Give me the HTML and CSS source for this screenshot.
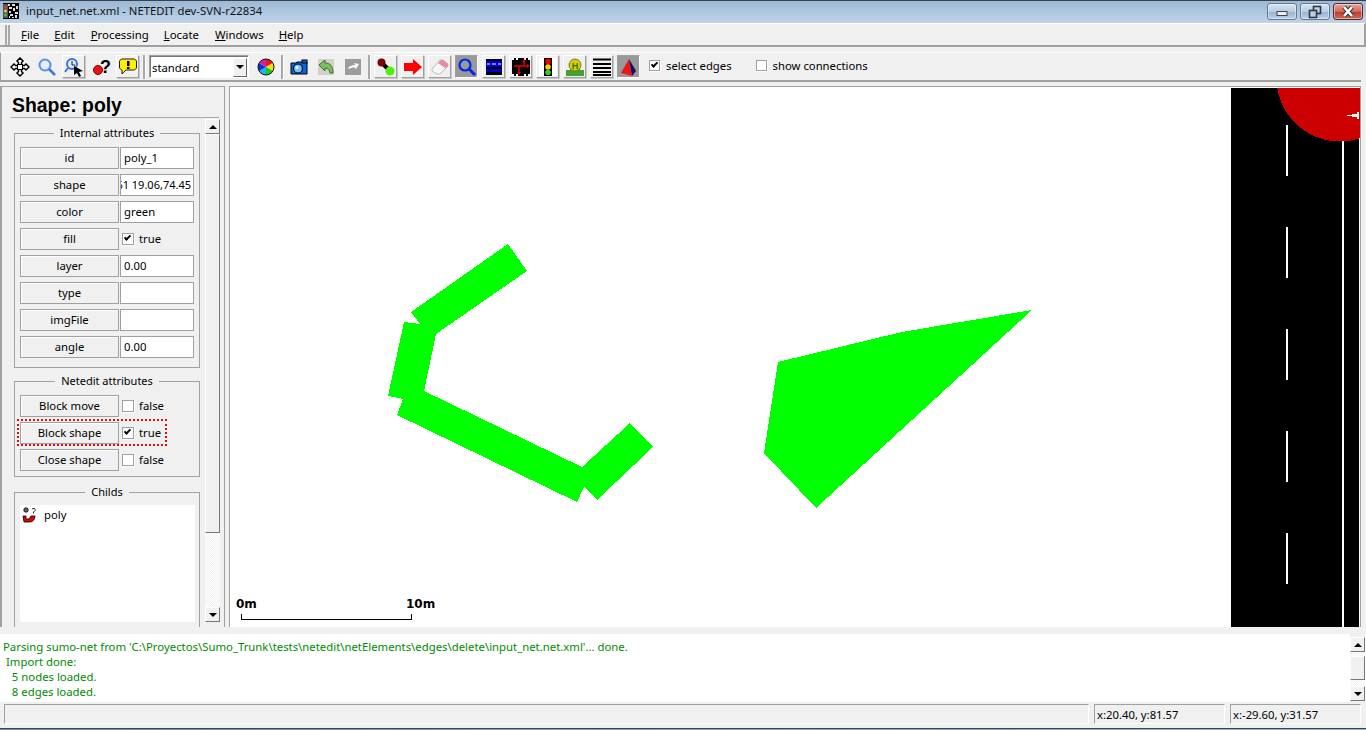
FILE: index.html
```html
<!DOCTYPE html>
<html lang="en">
<head>
<meta charset="utf-8">
<title>input_net.net.xml - NETEDIT dev-SVN-r22834</title>
<link rel="stylesheet" href="styles.css">
</head>
<body>
<header class="titlebar">
  <svg class="appicon" viewBox="0 0 16 16" width="16" height="16">
    <rect width="16" height="16" fill="#000"/>
    <path d="M5 1h2v2H5zM9 1h3v2H9zM13 3h2v3h-2zM6 4h3v2H6zM10 5h2v3h-2zM6 8h2v2H6zM12 9h3v2h-3zM7 11h3v2H7zM12 12h2v3h-2zM6 13h1v2H6zM9 14h2v1H9z" fill="#ddd"/>
    <rect x="0" y="1" width="5" height="14" fill="#555"/>
    <circle cx="2.5" cy="4" r="1.5" fill="#e33"/><circle cx="2.5" cy="8" r="1.5" fill="#ec3"/><circle cx="2.5" cy="12" r="1.5" fill="#4b4"/>
  </svg>
  <span class="title">input_net.net.xml - NETEDIT dev-SVN-r22834</span>
  <div class="winbtns">
    <div class="winbtn"><svg viewBox="0 0 30 17" width="30" height="17"><rect x="10" y="8.5" width="10" height="4" fill="#eee" stroke="#445" stroke-width="1"/></svg></div>
    <div class="winbtn"><svg viewBox="0 0 30 17" width="30" height="17"><rect x="13.5" y="3.5" width="7" height="7" fill="none" stroke="#334" stroke-width="1.6"/><rect x="9.5" y="7.5" width="7" height="7" fill="#b9cfe3" stroke="#334" stroke-width="1.6"/></svg></div>
    <div class="winbtn close"><svg viewBox="0 0 30 17" width="30" height="17"><path d="M11 4l8 9M19 4l-8 9" stroke="#334" stroke-width="4.5"/><path d="M11 4l8 9M19 4l-8 9" stroke="#fff" stroke-width="2.6"/></svg></div>
  </div>
</header>

<nav class="menubar">
  <div class="grip"></div>
  <span class="menu m-file"><u>F</u>ile</span>
  <span class="menu m-edit"><u>E</u>dit</span>
  <span class="menu m-proc"><u>P</u>rocessing</span>
  <span class="menu m-loc"><u>L</u>ocate</span>
  <span class="menu m-win"><u>W</u>indows</span>
  <span class="menu m-help"><u>H</u>elp</span>
</nav>

<div class="toolbar">
  <div class="tb"><svg viewBox="0 0 20 20" width="20" height="20"><path d="M10 1l3 3-1.500 1.500v3h3L16 7l3 3-3 3-1.500-1.500h-3v3L13 16l-3 3-3-3 1.500-1.500v-3h-3L4 13l-3-3 3-3 1.500 1.500h3v-3L7 4z" fill="#fff" stroke="#000" stroke-width="1.5"/><rect x="7.500" y="7.500" width="5" height="5" fill="#fff" stroke="#000"/></svg></div>
  <div class="tb"><svg viewBox="0 0 20 20" width="20" height="20"><circle cx="8" cy="8" r="5.500" fill="#e6eefc" stroke="#5b8fe8" stroke-width="2"/><path d="M12 12l6 6" stroke="#3a78e0" stroke-width="2.500"/></svg></div>
  <div class="tb raised"><svg viewBox="0 0 20 20" width="20" height="20"><circle cx="8" cy="7" r="5" fill="#dfe9fb" stroke="#3f74d8" stroke-width="2"/><path d="M8 4v4h3" stroke="#123" fill="none"/><path d="M4 11l-3 4" stroke="#3f74d8" stroke-width="2"/><path d="M10 9l9 5-4 1 2 4-2 1-2-4-3 2z" fill="#000"/></svg></div>
  <div class="tb"><svg viewBox="0 0 20 20" width="20" height="20"><circle cx="7" cy="13" r="4.500" fill="#e8131c" stroke="#700" stroke-width="1"/><text x="9" y="16" class="helpmark">?</text></svg></div>
  <div class="tb raised"><svg viewBox="0 0 20 20" width="20" height="20"><path d="M3.500 2h13l2 2v7l-2 2H8l-4 4v-4H3.500l-2-2V4z" fill="#fdf000" stroke="#222" stroke-width="1"/><rect x="9" y="4" width="2.500" height="5" fill="#000"/><rect x="9" y="10" width="2.500" height="2" fill="#000"/></svg></div>
  <div class="sep"></div>
  <div class="combo"><span class="combo-text">standard</span><span class="combo-btn"><i class="tri-down"></i></span></div>
  <div class="tb wheel"><svg viewBox="0 0 18 18" width="18" height="18"><path d="M9 9V1a8 8 0 0 1 6.900 4z" fill="#e8181c"/><path d="M9 9l6.900-4a8 8 0 0 1 0 8z" fill="#f8e008"/><path d="M9 9l6.900 4A8 8 0 0 1 9 17z" fill="#18c820"/><path d="M9 9v8a8 8 0 0 1-6.900-4z" fill="#18b8e8"/><path d="M9 9l-6.900 4a8 8 0 0 1 0-8z" fill="#1030d8"/><path d="M9 9L2.100 5A8 8 0 0 1 9 1z" fill="#d820a8"/><circle cx="9" cy="9" r="8" fill="none" stroke="#111"/></svg></div>
  <div class="sep"></div>
  <div class="tb"><svg viewBox="0 0 18 18" width="18" height="18"><path d="M1 5h5l1-1h10v12H1z" fill="#0a66d8" stroke="#000" stroke-width="1"/><rect x="12" y="2" width="5" height="3" fill="#0a66d8" stroke="#000"/><circle cx="8" cy="10.500" r="4.500" fill="#6cc4f4" stroke="#002" stroke-width="1.200"/><circle cx="7" cy="9.500" r="1.500" fill="#fff"/></svg></div>
  <div class="tb"><svg viewBox="0 0 16 16" width="16" height="16"><rect width="16" height="16" fill="#d4d0c8"/><path d="M1 6l6-5v3c5 0 8 3 8 10h-3c0-3-2-5-5-5v3z" fill="#7cc060" stroke="#3c6c30"/></svg></div>
  <div class="tb"><svg viewBox="0 0 16 16" width="16" height="16"><rect width="16" height="16" fill="#9c9c9c"/><path d="M14 5l-5-1 1 2c-3 0-5 1-7 3l1 1c2-1 4-2 6-1l1 1z" fill="#fff"/></svg></div>
  <div class="sep"></div>
  <div class="tb raised"><svg viewBox="0 0 18 18" width="18" height="18"><path d="M5 5l8 8" stroke="#000" stroke-width="4"/><circle cx="4.500" cy="4.500" r="4" fill="#7a0505"/><circle cx="13" cy="13" r="4.500" fill="#50f010"/></svg></div>
  <div class="tb raised"><svg viewBox="0 0 18 18" width="18" height="18"><path d="M0 5h9V1l9 8-9 8v-4H0z" fill="#fe0000"/></svg></div>
  <div class="tb raised"><svg viewBox="0 0 18 18" width="18" height="18"><path d="M1 11l8-9h3l5 4v2l-8 8H6l-5-3z" fill="#f6f6f6" stroke="#bbb"/><path d="M7 5l3-3h2l5 4v2l-3 2z" fill="#e88ca0"/></svg></div>
  <div class="tb pressed"><svg viewBox="0 0 20 20" width="20" height="20"><circle cx="8" cy="8" r="5.500" fill="none" stroke="#0028e8" stroke-width="2.200"/><path d="M12 12l6 6" stroke="#0028e8" stroke-width="3"/></svg></div>
  <div class="tb raised"><svg viewBox="0 0 16 16" width="16" height="16"><rect width="16" height="16" fill="#000"/><rect y="2" width="16" height="6" fill="#0000d8"/><path d="M1 5h3M6 5h4M12 5h3" stroke="#fff"/><rect y="10" width="16" height="3" fill="#0000c0"/></svg></div>
  <div class="tb raised"><svg viewBox="0 0 18 18" width="18" height="18"><rect width="18" height="18" fill="#000"/><path d="M0 0h2v2H0zM4 0h2v2H4zM12 0h2v2h-2zM16 0h2v2h-2zM0 16h2v2H0zM16 16h2v2h-2zM4 16h2v2H4zM12 16h2v2h-2z" fill="#fff"/><path d="M2 8h13M7 8v8M12 3v5" stroke="#e00000" stroke-width="1.500"/><path d="M5 14h4l-2 3zM15 6v4l3-2zM10 4h4l-2-3z" fill="#e00000"/></svg></div>
  <div class="tb raised"><svg viewBox="0 0 18 18" width="18" height="18"><rect x="0" width="18" height="18" fill="#fff"/><rect x="5" y="0" width="8" height="18" fill="#000"/><circle cx="9" cy="3.500" r="2.800" fill="#f00"/><circle cx="9" cy="9" r="2.800" fill="#fc0"/><circle cx="9" cy="14.500" r="2.800" fill="#3c3"/></svg></div>
  <div class="tb raised"><svg viewBox="0 0 18 18" width="18" height="18"><path d="M4 8h10v5H4z" fill="#46a030"/><rect x="0" y="12" width="18" height="6" fill="#46a030"/><circle cx="9" cy="7" r="6" fill="#e0c800" stroke="#708020"/><text x="9" y="10.500" class="busmark">H</text></svg></div>
  <div class="tb raised"><svg viewBox="0 0 18 18" width="18" height="18"><path d="M0 1.500h18M0 6h18M0 10h18M0 14h18M0 17h18" stroke="#000" stroke-width="2"/></svg></div>
  <div class="tb pressed"><svg viewBox="0 0 18 18" width="18" height="18"><path d="M9 1L1 15l11 3z" fill="#f01414"/><path d="M9 1l7 12-4 5z" fill="#101060"/></svg></div>
  <label class="check toolcheck first"><span class="cb on"></span>select edges</label>
  <label class="check toolcheck second"><span class="cb"></span>show connections</label>
</div>

<main class="main">
  <aside class="panel">
    <h1 class="panel-title">Shape: poly</h1>
    <div class="panel-body">
      <div class="panel-col">
        <fieldset class="group internal">
          <legend>Internal attributes</legend>
          <div class="row"><button class="attr">id</button><div class="field">poly_1</div></div>
          <div class="row"><button class="attr">shape</button><div class="field clip"><span>17.61 19.06,74.45</span></div></div>
          <div class="row"><button class="attr">color</button><div class="field">green</div></div>
          <div class="row"><button class="attr">fill</button><div class="checkcell"><span class="cb on"></span>true</div></div>
          <div class="row"><button class="attr">layer</button><div class="field">0.00</div></div>
          <div class="row"><button class="attr">type</button><div class="field"></div></div>
          <div class="row"><button class="attr">imgFile</button><div class="field"></div></div>
          <div class="row"><button class="attr">angle</button><div class="field">0.00</div></div>
        </fieldset>
        <fieldset class="group netedit">
          <legend>Netedit attributes</legend>
          <div class="row"><button class="attr">Block move</button><div class="checkcell"><span class="cb"></span>false</div></div>
          <div class="row focused"><button class="attr">Block shape</button><div class="checkcell"><span class="cb on"></span>true</div></div>
          <div class="row"><button class="attr">Close shape</button><div class="checkcell"><span class="cb"></span>false</div></div>
        </fieldset>
        <fieldset class="group childs">
          <legend>Childs</legend>
          <div class="list">
            <div class="list-item">
              <svg viewBox="0 0 16 16" width="16" height="16"><circle cx="4" cy="3" r="2.200" fill="#666" stroke="#000" stroke-width=".8"/><path d="M1 9h3v3h3l2-3h4c0 3-2 6-5 6H2z" fill="#e80000" stroke="#000" stroke-width=".8"/><path d="M10 2c2-1.500 4 0 3 1.500L11.500 5v1.500" fill="none" stroke="#222"/></svg>
              <span>poly</span>
            </div>
          </div>
        </fieldset>
      </div>
      <div class="scrollbar vbar panel-scroll">
        <div class="sb-btn"><i class="tri-up"></i></div>
        <div class="sb-thumb"></div>
        <div class="sb-track"></div>
        <div class="sb-btn"><i class="tri-down"></i></div>
      </div>
    </div>
  </aside>
  <section class="canvas">
    <svg class="scene" viewBox="230 88 1130 539" width="1130" height="539" shape-rendering="crispEdges">
      <rect x="1231" y="88" width="128" height="539" fill="#000"/>
      <path d="M1287 125v51M1287 227v51M1287 329v51M1287 431v51M1287 533v51" stroke="#fff" stroke-width="2"/>
      <path d="M1343 125V627" stroke="#fff" stroke-width="2"/>
      <circle cx="1340" cy="78" r="63.500" fill="#cc0000"/>
      <path d="M1347 115h5v-1h5v-2h2v7h-2v-2h-5v-1h-5z" fill="#fff"/>
      <g fill="#00ff00">
        <path d="M508 244L527 271 436 334 420 324 411 312z"/>
        <path d="M404 322L420 324 436 334 424 391 403 399 388 396z"/>
        <path d="M424 391L582 467 584 487 577 502 397 415 403 399z"/>
        <path d="M582 467L630 423 653 447 597 500 584 487z"/>
        <path d="M1032 310L902 332 778 362 764 453 816 508z"/>
      </g>
    </svg>
    <div class="scale">
      <span class="s0">0m</span><span class="s10">10m</span>
      <div class="scale-rule"></div>
    </div>
  </section>
</main>

<section class="messages">
  <div class="log">
    <div class="ln">Parsing sumo-net from 'C:\Proyectos\Sumo_Trunk\tests\netedit\netElements\edges\delete\input_net.net.xml'... done.</div>
    <div class="ln"> Import done:</div>
    <div class="ln">   5 nodes loaded.</div>
    <div class="ln">   8 edges loaded.</div>
  </div>
  <div class="scrollbar vbar log-scroll">
    <div class="sb-btn"><i class="tri-up"></i></div>
    <div class="sb-track gap-top"></div>
    <div class="sb-thumb"></div>
    <div class="sb-track"></div>
    <div class="sb-btn"><i class="tri-down"></i></div>
  </div>
</section>

<footer class="status">
  <div class="stat grow"></div>
  <div class="stat coord">x:20.40, y:81.57</div>
  <div class="stat coord">x:-29.60, y:31.57</div>
</footer>
<div class="desk"></div>
</body>
</html>
```
FILE: styles.css
```css
* { box-sizing: border-box; }
html, body { margin: 0; padding: 0; }
body {
  width: 1366px; height: 730px; overflow: hidden;
  background: #f0f0f0; color: #000;
  font: 11.3px/14px "Noto Sans", "DejaVu Sans", sans-serif;
  display: flex; flex-direction: column;
}
.titlebar {
  height: 23px; flex: none; display: flex; align-items: center;
  padding: 0 3px 0 3px;
  background: linear-gradient(#9db9d6, #bfd4e8);
  border-top: 1px solid #39424d;
}
.appicon { flex: none; margin-bottom: 2px; }
.title { margin-left: 7px; margin-bottom: 2px; font-size: 11.3px; color: #111; }
.winbtns { margin-left: auto; display: flex; gap: 3px; align-self: flex-start; margin-top: 2px; }
.winbtn {
  width: 30px; height: 17px; border: 1px solid #5f7a96; border-radius: 3px;
  background: linear-gradient(#d8e5f1 0, #b6cde2 50%, #94b2cf 51%, #bcd2e6 100%);
  overflow: hidden; display: flex; align-items: center; justify-content: center;
  box-shadow: inset 0 0 0 1px rgba(255,255,255,.45);
}
.winbtn svg { margin: -1px; flex: none; }
.winbtn.close { background: linear-gradient(#e8a79c 0, #d0685a 50%, #b83a2c 51%, #cf6a58 100%); border-color: #5a2a2a; }

.menubar {
  height: 24px; flex: none; display: flex; align-items: center;
  border-top: 1px solid #fff; border-bottom: 2px solid #a0a0a0; border-right: 2px solid #a0a0a0;
  padding-left: 5px;
}
.grip { width: 5px; height: 20px; border-left: 2px solid #a8a8a8; border-right: 2px solid #a8a8a8; }
.menu { font-size: 11.4px; white-space: nowrap; }
.m-file { margin-left: 11px; }
.m-edit { margin-left: 15px; }
.m-proc { margin-left: 16px; }
.m-loc { margin-left: 15px; }
.m-win { margin-left: 16px; }
.m-help { margin-left: 15px; }

.toolbar {
  height: 30px; flex: none; margin: 5px 5px 0 0;
  display: flex; align-items: center; gap: 4px; padding-left: 7px;
  border-top: 1px solid #fff; border-left: 1px solid #a0a0a0;
  border-bottom: 2px solid #a0a0a0;
}
.tb {
  width: 23px; height: 23px; flex: none; display: flex; align-items: center; justify-content: center;
}
.tb.raised { background: #f0f0f0; border: 1px solid; border-color: #fff #a0a0a0 #a0a0a0 #fff; box-shadow: 1px 1px 0 #c8c8c8; }
.tb.pressed { background: #999; border: 1px solid; border-color: #a0a0a0 #fff #fff #a0a0a0; }
.sep { width: 2px; height: 24px; background: #a8a8a8; box-shadow: 1px 0 0 #fff; flex: none; }
.combo {
  width: 100px; height: 23px; flex: none; display: flex; background: #fff;
  border: 1px solid #a0a0a0; border-right-color: #fff; border-bottom-color: #fff;
  box-shadow: inset 1px 1px 0 #777; align-items: center; padding: 1px 1px 0 2px; font-size: 11.3px;
}
.combo-text { padding-top: 2px; }
.combo-btn {
  margin-left: auto; width: 14px; height: 19px; background: #f0f0f0; display: flex; align-items: center; justify-content: center;
  border: 1px solid; border-color: #fff #666 #666 #fff;
}
.tb.wheel { margin-left: 1px; }
.tri-down, .tri-up { display: block; width: 0; height: 0; border-left: 4px solid transparent; border-right: 4px solid transparent; }
.tri-down { border-top: 4px solid #000; }
.tri-up { border-bottom: 4px solid #000; }
.check { display: flex; align-items: center; white-space: nowrap; padding-bottom: 2px; }
.toolcheck.first { margin-left: 5px; }
.toolcheck.second { margin-left: 20px; }
.toolcheck .cb { margin-right: 6px; width: 11px; height: 11px; }
.cb {
  width: 12px; height: 12px; flex: none; background: #fff; display: block; position: relative;
  border: 1px solid #a0a0a0; box-shadow: 1px 1px 0 #fff;
}
.cb.on::after {
  content: ""; position: absolute; left: 1px; top: 1px; width: 7px; height: 4px;
  border-left: 2px solid #000; border-bottom: 2px solid #000; transform: rotate(-45deg) scale(.95);
  box-sizing: border-box;
}
.helpmark { font: bold 18px "Liberation Sans", sans-serif; fill: #000; }
.busmark { font: bold 9px "Liberation Sans", sans-serif; fill: #208020; text-anchor: middle; }

.main { height: 541px; flex: none; margin-top: 4px; display: flex; gap: 4px; }
.panel {
  width: 225px; flex: none; height: 541px; display: flex; flex-direction: column;
  border: 1px solid #a0a0a0; border-bottom: 0; border-left-width: 2px; padding-left: 9px; padding-right: 5px;
  overflow: hidden;
}
.panel-title {
  margin: 0; height: 31px; flex: none; font: bold 19.4px/36px "Liberation Sans", sans-serif; padding-left: 1px;
  border-bottom: 1px solid #a8a8a8;
}
.panel-body { display: flex; flex: 1; min-height: 0; gap: 5px; padding-top: 1px; }
.panel-col { width: 186px; margin-left: 3px; flex: none; padding-top: 7px; overflow: hidden; }
.group {
  margin: 0; padding: 7px 5px 5px; width: 186px; border: 1px solid #a0a0a0; min-width: 0;
  display: flex; flex-direction: column; gap: 5px;
}
.group legend { margin: 0 auto; padding: 0 6px; height: 14px; line-height: 14px; font-size: 11px; }
.internal { padding-bottom: 9px; }
.netedit { margin-top: 6px; }
.childs { margin-top: 8px; padding-top: 6px; height: 160px; }
.row { display: flex; height: 22px; gap: 1px; position: relative; flex: none; }
.attr {
  width: 99px; height: 22px; flex: none; padding: 0; background: #f0f0f0; color: #000;
  border: 1px solid #a0a0a0; box-shadow: inset 1px 1px 0 #fff;
  font: 11.3px/14px "Noto Sans", "DejaVu Sans", sans-serif;
}
.field {
  width: 74px; height: 22px; background: #fff; border: 1px solid #a0a0a0; padding: 3px 3px; white-space: nowrap; overflow: hidden;
}
.field.clip { display: flex; justify-content: flex-end; padding: 3px 2px 3px 0; font-size: 11px; }
.field.clip span { flex: none; }
.checkcell { display: flex; align-items: center; gap: 5px; padding-left: 2px; }
.focused::after {
  content: ""; position: absolute; left: -3px; top: -3px; width: 150px; height: 27px;
  border: 2px dotted #e01010; pointer-events: none; box-sizing: border-box;
}
.list { background: #fff; height: 117px; margin-right: -1px; padding: 0 0 0 2px; width: 175px; }
.list-item { display: flex; align-items: center; gap: 6px; height: 20px; }

.scrollbar { display: flex; flex-direction: column; }
.panel-scroll { width: 15px; flex: none; height: 503px; }
.sb-btn {
  width: 15px; height: 15px; flex: none; background: #f0f0f0; display: flex; align-items: center; justify-content: center;
  border: 1px solid; border-color: #fff #777 #777 #fff;
}
.sb-thumb {
  width: 15px; flex: 1; background: #f0f0f0;
  border: 1px solid; border-color: #fff #777 #777 #fff;
}
.panel-scroll .sb-thumb { flex: none; height: 399px; }
.sb-track {
  flex: 1; width: 15px;
  background: conic-gradient(#f0f0f0 25%, #fff 0 50%, #f0f0f0 0 75%, #fff 0) 0 0 / 2px 2px;
}
.canvas {
  width: 1132px; height: 541px; flex: none; position: relative; background: #fff; padding: 1px 0 0;
  border-left: 1px solid #a0a0a0; border-top: 1px solid #a0a0a0; border-right: 1px solid #a0a0a0;
}
.scene { display: block; }
.scale { position: absolute; left: 6px; top: 510px; width: 210px; height: 24px; font: bold 12px/14px "DejaVu Sans", sans-serif; }
.s0 { position: absolute; left: 0; top: 0; }
.s10 { position: absolute; left: 170px; top: 0; }
.scale-rule { position: absolute; left: 5px; top: 17px; width: 171px; height: 6px; border: 1px solid #000; border-top: 0; }

.messages {
  height: 68px; flex: none; margin-top: 7px; display: flex; background: #fff;
}
.log { flex: 1; padding: 5px 0 0 3px; color: #008c00; font-size: 11.35px; }
.ln { height: 15px; line-height: 15px; white-space: pre; }
.log-scroll { width: 15px; flex: none; padding-top: 3px; padding-bottom: 1px; background: #f0f0f0; height: 68px; margin-right: 1px; }
.log-scroll .sb-thumb { flex: none; height: 24px; }
.log-scroll .gap-top { flex: none; height: 4px; }
.status { height: 26px; flex: none; display: flex; gap: 5px; padding: 2px 5px 0 4px; }
.stat {
  height: 20px; border: 1px solid; border-color: #a0a0a0 #fff #fff #a0a0a0; padding: 3px 0 0 2px; white-space: nowrap;
}
.stat.grow { flex: 1; }
.stat.coord { width: 131px; }
.desk { flex: 1; background: linear-gradient(90deg, #6b8fb5, #8fb0d0); border-top: 1px solid #444; }
```
